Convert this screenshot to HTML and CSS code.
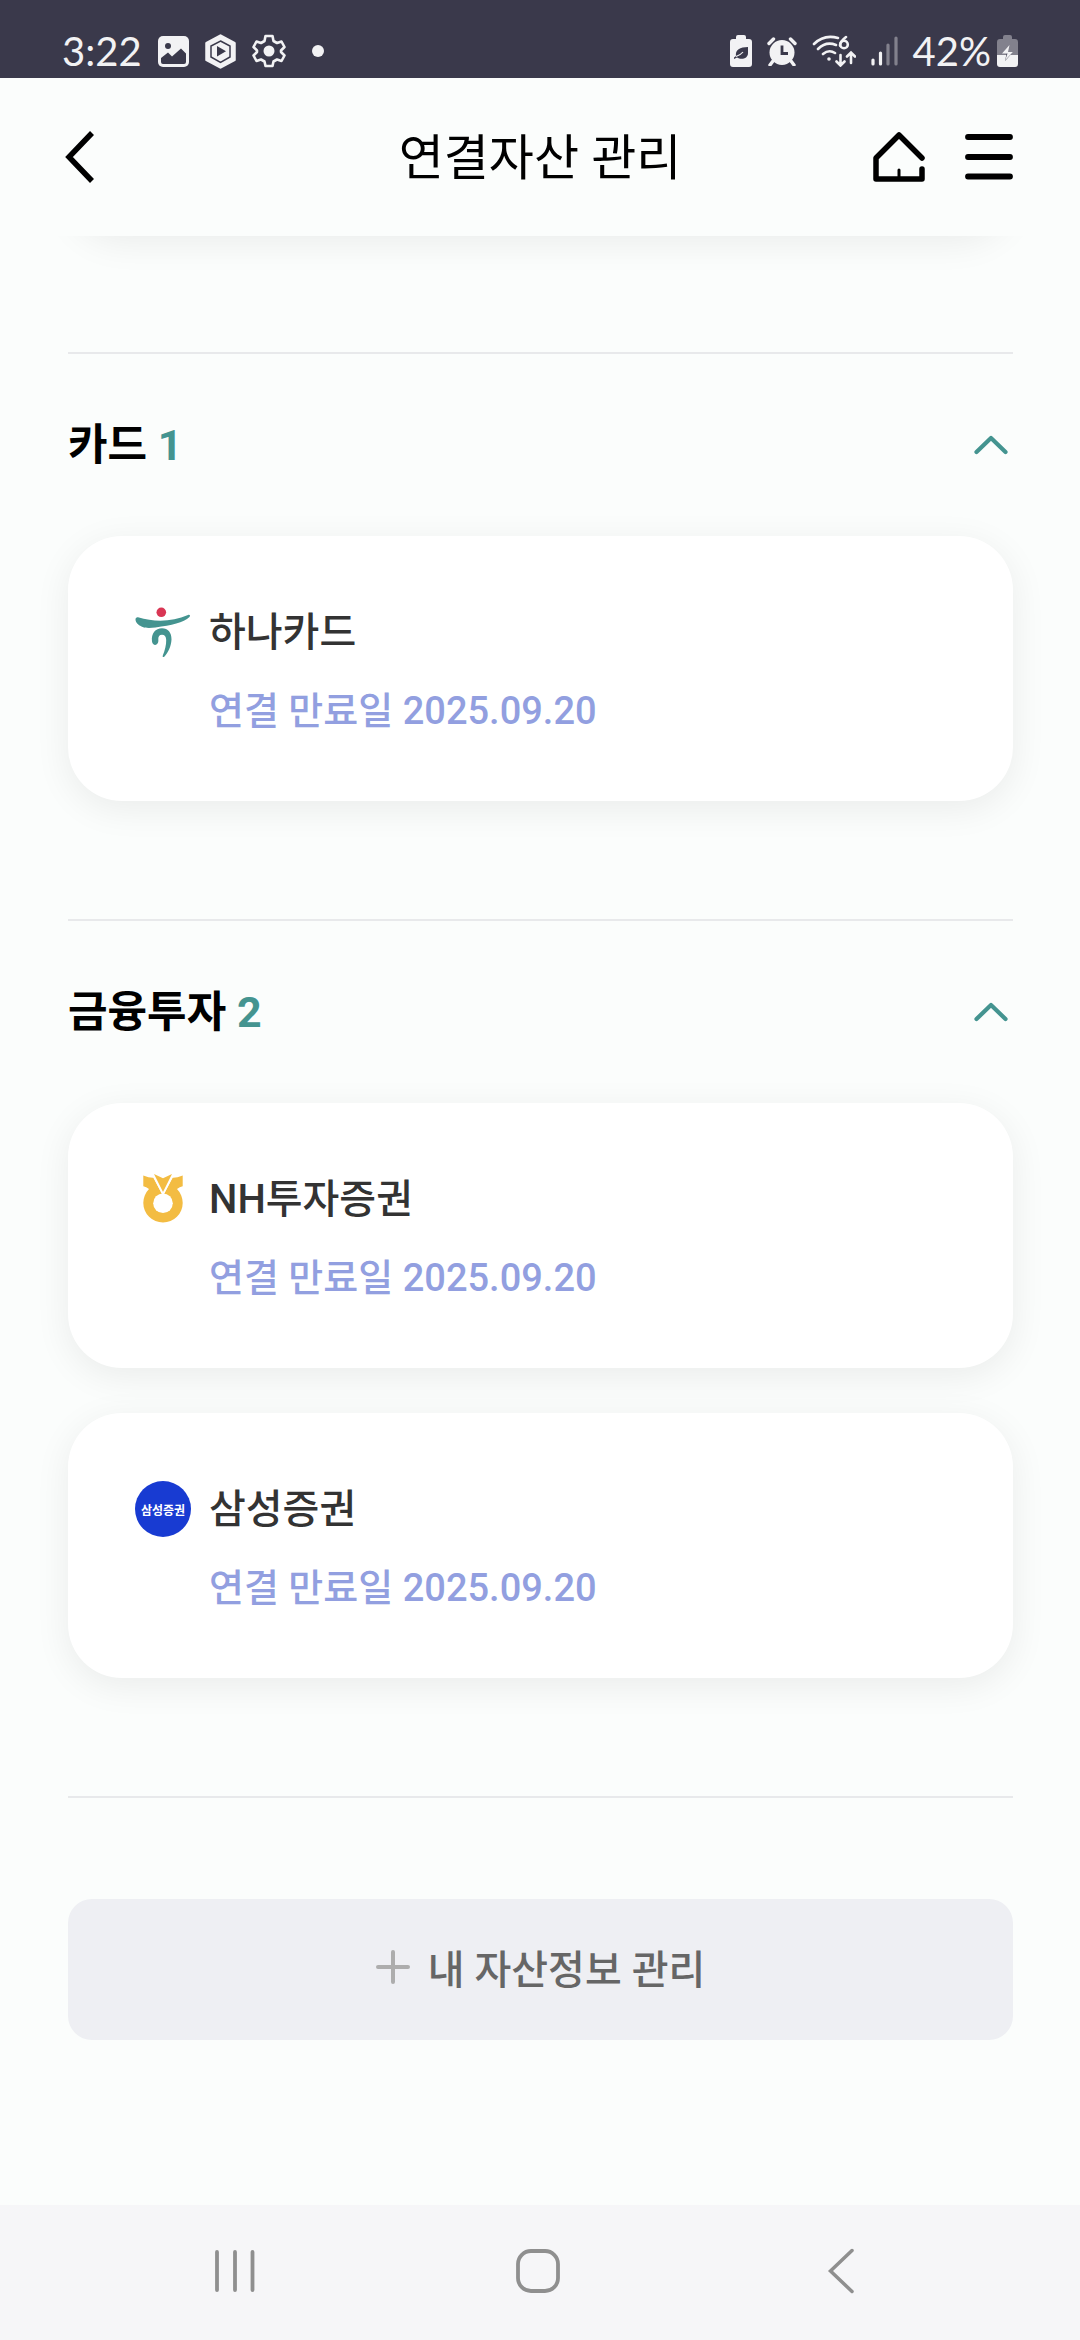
FILE: index.html
```html
<!DOCTYPE html>
<html lang="ko">
<head>
<meta charset="utf-8">
<meta name="viewport" content="width=device-width, initial-scale=1">
<title>연결자산 관리</title>
<link rel="stylesheet" href="styles.css">
</head>
<body>
<div class="screen">
  <div class="status">
    <div class="status-left">
      <span class="status-text">3:22</span>
      <svg width="31" height="31" viewBox="0 0 31 31"><rect width="31" height="31" rx="5" fill="#f2f2f4"/><circle cx="10" cy="10" r="3" fill="#3a394b"/><path d="M3 22 10 16.500l4 4 9-8 5 5V26a2 2 0 0 1-2 2H5a2 2 0 0 1-2-2z" fill="#3a394b"/></svg>
      <svg width="31" height="35" viewBox="0 0 31 35"><path d="M15.500 1.500 29.500 9v17L15.500 33.500 1.500 26V9z" fill="#f2f2f4" stroke="#f2f2f4" stroke-width="2.500" stroke-linejoin="round"/><path d="M15.500 7 25 12v11l-9.500 5.500L6 23V12z" fill="none" stroke="#3a394b" stroke-width="1.500"/><path d="M12 12v10.500L21 17.300z" fill="#3a394b"/></svg>
      <svg width="34" height="34" viewBox="0 0 34 34"><path d="M13.500 2h7l1 5 3.500 2 4.500-1.500 3 5.500-3.500 3.500v1.500l3.500 3.500-3 5.500-4.500-1.500-3.500 2-1 4.500h-7l-1-4.500-3.500-2L4.500 27l-3-5.500L5 18v-1.500L1.500 13l3-5.500L9 9l3.500-2z" fill="none" stroke="#f2f2f4" stroke-width="2.600" stroke-linejoin="round"/><circle cx="17" cy="17" r="5.500" fill="#f2f2f4"/></svg>
      <span class="dot"></span>
    </div>
    <div class="status-right">
      <svg width="22" height="32" viewBox="0 0 22 32"><path d="M6 4V2a2 2 0 0 1 2-2h6a2 2 0 0 1 2 2v2h3a3 3 0 0 1 3 3v22a3 3 0 0 1-3 3H3a3 3 0 0 1-3-3V7a3 3 0 0 1 3-3z" fill="#f2f2f4"/><path d="M18 12v6c0 6-7 7-11 4.500L4 24v-1.500l2-1.500c-1-6 4-9 12-9z" fill="#3a394b"/><path d="M6 21.500c3-1 5-2 7-4.500" fill="none" stroke="#f2f2f4" stroke-width="1.200"/></svg>
      <svg width="30" height="29" viewBox="0 0 30 29"><circle cx="15" cy="15.500" r="12.500" fill="#f2f2f4"/><path d="M2 6.500 6.500 2M28 6.500 23.500 2M6 24l-3 4M24 24l3 4" stroke="#f2f2f4" stroke-width="3.400" stroke-linecap="round"/><path d="M15 8.500v8h6" fill="none" stroke="#3a394b" stroke-width="2.800"/></svg>
      <svg width="44" height="32" viewBox="0 0 44 32" fill="none" stroke="#f2f2f4" stroke-width="2.600" stroke-linecap="round"><path d="M2 9Q12-1 26 3M6 14q8-8 18-4M11 19q6-5 12-1"/><circle cx="17" cy="24" r="1.800" fill="#f2f2f4" stroke="none"/><path d="M34 2c-4 3-6 6-6 8.500M28.500 20v10M24.500 26.500l4 4 4-4M39 28V18M35 21.500l4-4 4 4"/><circle cx="32" cy="9.500" r="3.800"/></svg>
      <svg width="27" height="30" viewBox="0 0 27 30" stroke-width="3.200" stroke-linecap="round"><path d="M2 24v4M9.500 17v11" stroke="#f2f2f4"/><path d="M17 9v19M25 2v26" stroke="#82818d"/></svg>
      <span class="battery">
        <span class="status-text">42%</span>
        <svg width="21" height="32" viewBox="0 0 21 32"><path d="M6 4V2a2 2 0 0 1 2-2h5a2 2 0 0 1 2 2v2h3a3 3 0 0 1 3 3v13H0V7a3 3 0 0 1 3-3z" fill="#82818d"/><path d="M0 20h21v9a3 3 0 0 1-3 3H3a3 3 0 0 1-3-3z" fill="#f2f2f4"/><path d="M10 17l-2 9 8-9z" fill="#3a394b"/><path d="M12.500 10 5 18.500h5.500L8 25.500l8-8.500h-5l1.500-7z" fill="#f2f2f4"/></svg>
      </span>
    </div>
  </div>

  <header class="header">
    <button class="icon-button back" aria-label="뒤로"><svg width="34" height="54" viewBox="0 0 34 54"><path d="M29 3 6 27l23 24" fill="none" stroke="#000" stroke-width="5.500"/></svg></button>
    <h1 class="title">연결자산 관리</h1>
    <div class="header-actions">
      <button class="icon-button" aria-label="홈"><svg width="52" height="52" viewBox="0 0 52 52" fill="none" stroke="#000" stroke-width="5.500" stroke-linecap="round" stroke-linejoin="round"><path d="M49 27 26 4 3 27v21h46V38"/><path d="M26 39v8" stroke-width="3"/></svg></button>
      <button class="icon-button" aria-label="메뉴"><svg width="52" height="52" viewBox="0 0 52 52"><path d="M3 6h42M3 26h42M3 45.500h42" stroke="#000" stroke-width="5.800" stroke-linecap="round"/></svg></button>
    </div>
  </header>

  <main class="content">
    <div class="card card-tail"></div>

    <section class="group">
      <div class="group-head">
        <h2 class="group-title">카드 <span class="count">1</span></h2>
        <button class="icon-button toggle" aria-label="카드 접기"><svg width="34" height="20" viewBox="0 0 34 20"><path d="M2.500 17 17 3l14.500 14" fill="none" stroke="#449490" stroke-width="4.200" stroke-linecap="round" stroke-linejoin="round"/></svg></button>
      </div>
      <article class="card">
        <svg class="logo" width="56" height="56" viewBox="0 0 56 56"><circle cx="26.300" cy="8.300" r="4.800" fill="#d93654"/><path d="M3 13.300c17 5 34 4.500 50-2.300 2-.500 2.500.500 1.500 2-6 6-18 8-34 10.500-5 .500-10 1-14-1C3 21 .5 18 .5 15.500c0-1.500 1-2.500 2.500-2.200z" fill="#449490"/><path d="M22.500 39.500c-1.500 2.500-5 1.500-5.500-2-1-8 3.500-13.200 10-13.200 6 0 9.700 4.500 9.500 11.200-.300 7-3.500 13-7 17-1.200 1.200-2.200.500-1.700-1C30 46 31.300 41 31.200 36c0-3.500-1.700-5.300-4.200-5.300-2.800 0-3.800 2-3.700 4.300.2 2 0 3.500-.8 4.500z" fill="#449490"/></svg>
        <div class="card-text"><h3 class="name">하나카드</h3><p class="expiry">연결 만료일 2025.09.20</p></div>
      </article>
    </section>

    <section class="group">
      <div class="group-head">
        <h2 class="group-title">금융투자 <span class="count">2</span></h2>
        <button class="icon-button toggle" aria-label="금융투자 접기"><svg width="34" height="20" viewBox="0 0 34 20"><path d="M2.500 17 17 3l14.500 14" fill="none" stroke="#449490" stroke-width="4.200" stroke-linecap="round" stroke-linejoin="round"/></svg></button>
      </div>
      <article class="card">
        <svg class="logo" width="56" height="56" viewBox="0 0 56 56"><path d="M8.300 4.500q6 2.500 10 2.300L27 23h2l8.700-16.200q4 .2 10-2.300v10.700q-3 .8-5.700 2.800a19.700 19.700 0 1 1-28 0q-2.700-2-5.700-2.800z" fill="#f3bc42"/><path d="M19 3l9 4.200L37 3l-9 18z" fill="#f3bc42"/><path d="M18.300 4.500 28 23.500l9.700-19" fill="none" stroke="#fff" stroke-width="1.300"/><circle cx="28" cy="32.300" r="9.800" fill="#fff"/></svg>
        <div class="card-text"><h3 class="name">NH투자증권</h3><p class="expiry">연결 만료일 2025.09.20</p></div>
      </article>
      <article class="card">
        <span class="logo logo-round">삼성증권</span>
        <div class="card-text"><h3 class="name">삼성증권</h3><p class="expiry">연결 만료일 2025.09.20</p></div>
      </article>
    </section>

    <div class="footer">
      <button class="manage"><svg width="34" height="34" viewBox="0 0 34 34"><path d="M2 17h30M17 2v30" stroke="#adadad" stroke-width="4" stroke-linecap="round"/></svg>내 자산정보 관리</button>
    </div>
  </main>

  <nav class="navbar">
    <button class="icon-button" aria-label="최근 앱"><svg width="42" height="46" viewBox="0 0 42 46"><path d="M3 4v38M21 4v38M38.500 4v38" stroke="#8f8f8f" stroke-width="3.800" stroke-linecap="round"/></svg></button>
    <button class="icon-button" aria-label="홈 화면"><svg width="46" height="46" viewBox="0 0 46 46"><rect x="3" y="3" width="40" height="40" rx="13" fill="none" stroke="#8f8f8f" stroke-width="3.800"/></svg></button>
    <button class="icon-button" aria-label="이전"><svg width="28" height="46" viewBox="0 0 28 46"><path d="M25 2.500 3.500 23 25 43.500" fill="none" stroke="#8f8f8f" stroke-width="3.500" stroke-linecap="round"/></svg></button>
  </nav>
</div>
</body>
</html>
```
FILE: styles.css
```css
* { box-sizing: border-box; }

body {
  margin: 0;
  background: #fbfdfc;
  color: #000;
  font-family: Roboto, "Noto Sans CJK KR", sans-serif;
}

h1, h2, h3, p { margin: 0; }
svg { display: block; flex: none; }

button {
  border: 0;
  padding: 0;
  background: none;
  font: inherit;
  cursor: pointer;
}

.screen {
  display: flex;
  flex-direction: column;
  min-height: 100vh;
}

.status {
  display: flex;
  justify-content: space-between;
  align-items: flex-end;
  height: 78px;
  padding: 0 62px 9px;
  background: #3a394b;
  color: #f2f2f4;
  font-family: Lato, sans-serif;
}

.status-left, .status-right {
  display: flex;
  align-items: center;
  height: 36px;
}

.status-left { gap: 16px; }
.status-right { gap: 15px; }
.status-text { font-size: 40px; line-height: 36px; }

.dot {
  width: 12px;
  height: 12px;
  margin-left: 10px;
  border-radius: 50%;
  background: #f2f2f4;
}

.battery { display: flex; align-items: center; gap: 6px; }

.header {
  display: grid;
  grid-template-columns: 1fr auto 1fr;
  align-items: center;
  height: 158px;
  padding: 0 63px;
}

.icon-button { display: flex; align-items: center; justify-content: center; }
.back { justify-self: start; }

.title {
  padding-top: 4px;
  font-size: 49px;
  font-weight: 400;
  line-height: 60px;
}

.header-actions { display: flex; justify-content: flex-end; gap: 40px; }

.content {
  flex: 1;
  overflow: hidden;
  padding: 0 67px 0 68px;
}

.card {
  display: flex;
  gap: 18px;
  min-height: 265px;
  padding: 67px 67px 60px;
  border-radius: 54px;
  background: #fff;
  box-shadow: 0 8px 36px rgba(0, 0, 0, 0.07);
}

.card + .card { margin-top: 45px; }

/* The list is scrolled: only the shadow of the card above shows below the header. */
.card-tail { margin-top: -267px; }

.group { margin-top: 118px; border-top: 2px solid #e8e9eb; }

.group-head {
  display: flex;
  justify-content: space-between;
  align-items: center;
  height: 182px;
}

.group-title { font-size: 43px; font-weight: 700; line-height: 60px; }
.count { color: #449490; }
.toggle { padding: 0 5px; }

.logo { width: 56px; height: 56px; margin-top: 1px; flex: none; }

.logo-round {
  display: flex;
  align-items: center;
  justify-content: center;
  border-radius: 50%;
  background: #183bd2;
  color: #fff;
  font-size: 12px;
  font-weight: 700;
}

.name { color: #333; font-size: 40px; font-weight: 500; line-height: 60px; }

.expiry {
  margin-top: 18px;
  color: #929fe0;
  font-size: 38px;
  font-weight: 500;
  line-height: 60px;
}

.footer { margin-top: 118px; padding: 101px 0; border-top: 2px solid #e8e9eb; }

.manage {
  display: flex;
  align-items: center;
  justify-content: center;
  gap: 18px;
  width: 100%;
  height: 141px;
  padding-bottom: 6px;
  border-radius: 24px;
  background: #eeeff3;
  color: #666;
  font-size: 40px;
  font-weight: 500;
}

.navbar {
  display: grid;
  grid-template-columns: repeat(3, 1fr);
  height: 135px;
  padding: 0 88px 4px 84px;
  background: #f6f6f8;
}
```
